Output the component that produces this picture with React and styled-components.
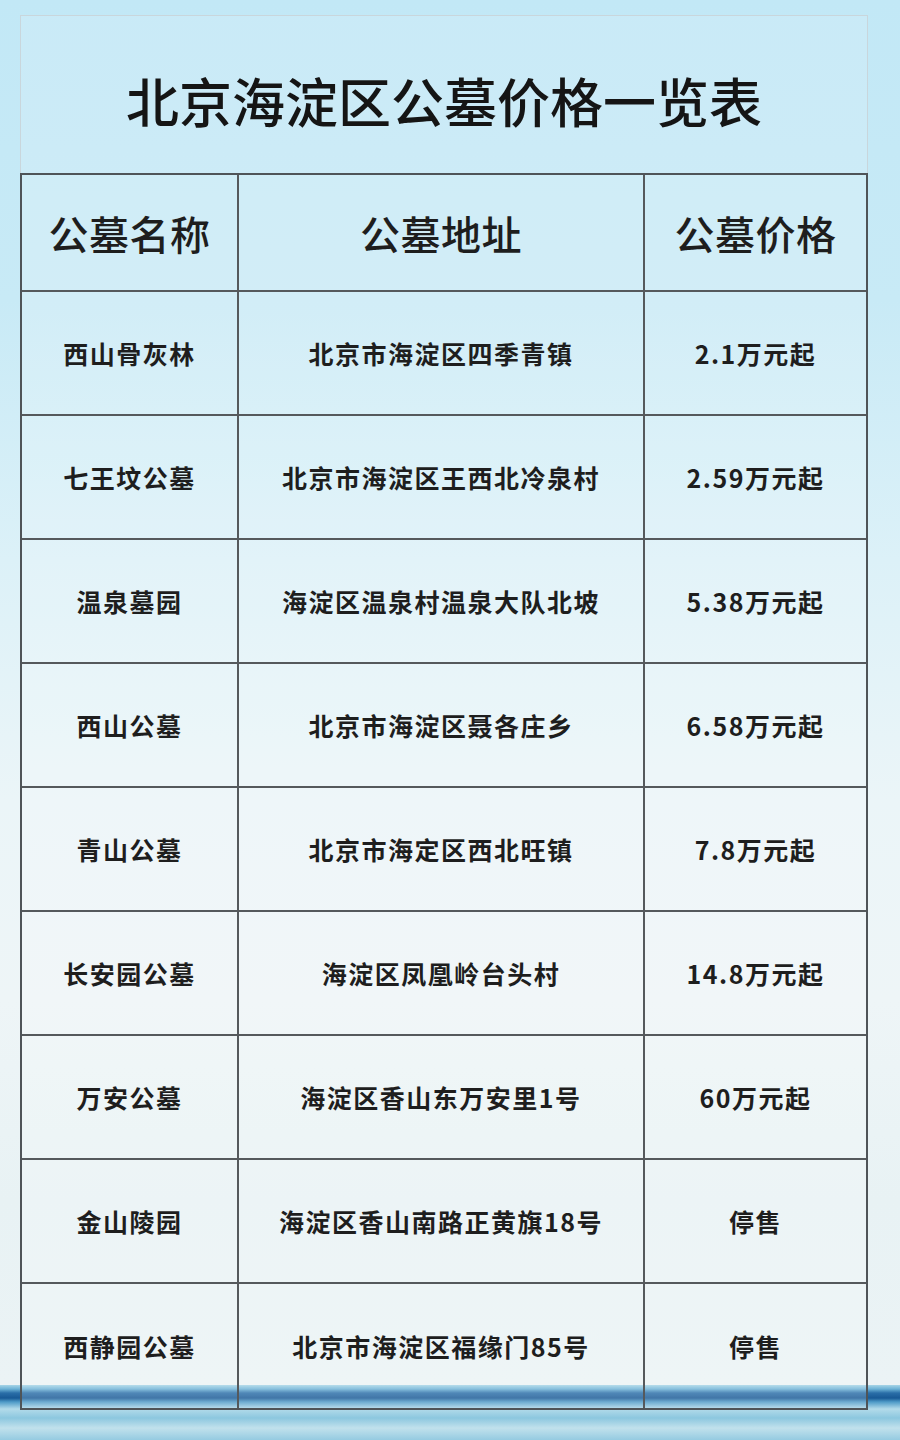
import React from "react";
import styled, { createGlobalStyle } from "styled-components";

const GlobalStyle = createGlobalStyle`
  html, body {
    margin: 0;
    padding: 0;
  }
  body {
    font-family: "Noto Sans CJK SC", "Noto Sans", sans-serif;
    color: #1c1c1c;
  }
`;

const Page = styled.div`
  width: 900px;
  height: 1440px;
  overflow: hidden;
  box-sizing: border-box;
  padding: 15px 32px 0 20px;
  background:
    linear-gradient(
      180deg,
      rgba(255, 255, 255, 0) 0px,
      rgba(255, 255, 255, 0) 1385px,
      #a7d5e7 1385px,
      #6cb2d6 1389px,
      #2a6ea8 1393px,
      #185995 1398px,
      #4f9bc8 1402px,
      #b3dbea 1409px,
      #8cc7df 1418px,
      #c1e1ec 1428px,
      #95cbe1 1440px
    ),
    linear-gradient(
      180deg,
      #c2e8f6 0px,
      #c8eaf6 300px,
      #dcf1f8 560px,
      #ebf5f8 800px,
      #eef5f7 1000px,
      #e8f2f4 1200px,
      #ebf3f5 1385px
    );
`;

const Card = styled.div`
  width: 848px;
  display: flex;
  flex-direction: column;
`;

const TitleBox = styled.div`
  height: 158px;
  box-sizing: border-box;
  border: 1px solid #c9d6dc;
  border-bottom: none;
  background: rgba(255, 255, 255, 0.12);
  display: flex;
  align-items: center;
  justify-content: center;
  padding-top: 12px;
`;

const Title = styled.h1`
  margin: 0;
  font-size: 53px;
  font-weight: 500;
  line-height: 1;
  color: #151515;
`;

const Table = styled.div`
  display: grid;
  grid-template-columns: 217px 406px 1fr;
  border: 2px solid #4f5458;
  background: rgba(255, 255, 255, 0.18);
`;

const Cell = styled.div`
  height: ${({ $head }) => ($head ? "117px" : "124px")};
  box-sizing: border-box;
  display: flex;
  align-items: center;
  justify-content: center;
  border-right: ${({ $last }) => ($last ? "none" : "2px solid #55595c")};
  border-bottom: ${({ $bottom }) => ($bottom ? "none" : "2px solid #55595c")};
  font-size: ${({ $head }) => ($head ? "40px" : "25px")};
  font-weight: ${({ $head }) => ($head ? 500 : 700)};
  letter-spacing: ${({ $head }) => ($head ? "0.5px" : "1.5px")};
  color: #1e1e1e;
  white-space: nowrap;
`;

const headers = ["公墓名称", "公墓地址", "公墓价格"];

const rows = [
  ["西山骨灰林", "北京市海淀区四季青镇", "2.1万元起"],
  ["七王坟公墓", "北京市海淀区王西北冷泉村", "2.59万元起"],
  ["温泉墓园", "海淀区温泉村温泉大队北坡", "5.38万元起"],
  ["西山公墓", "北京市海淀区聂各庄乡", "6.58万元起"],
  ["青山公墓", "北京市海定区西北旺镇", "7.8万元起"],
  ["长安园公墓", "海淀区凤凰岭台头村", "14.8万元起"],
  ["万安公墓", "海淀区香山东万安里1号", "60万元起"],
  ["金山陵园", "海淀区香山南路正黄旗18号", "停售"],
  ["西静园公墓", "北京市海淀区福缘门85号", "停售"],
];

const App = () => {
  return (
    <>
      <GlobalStyle />
      <Page>
        <Card>
          <TitleBox>
            <Title>北京海淀区公墓价格一览表</Title>
          </TitleBox>
          <Table>
            {headers.map((h, i) => (
              <Cell key={h} $head $last={i === 2}>
                {h}
              </Cell>
            ))}
            {rows.map((row, r) =>
              row.map((text, c) => (
                <Cell
                  key={`${r}-${c}`}
                  $last={c === 2}
                  $bottom={r === rows.length - 1}
                >
                  {text}
                </Cell>
              ))
            )}
          </Table>
        </Card>
      </Page>
    </>
  );
};

export default App;
